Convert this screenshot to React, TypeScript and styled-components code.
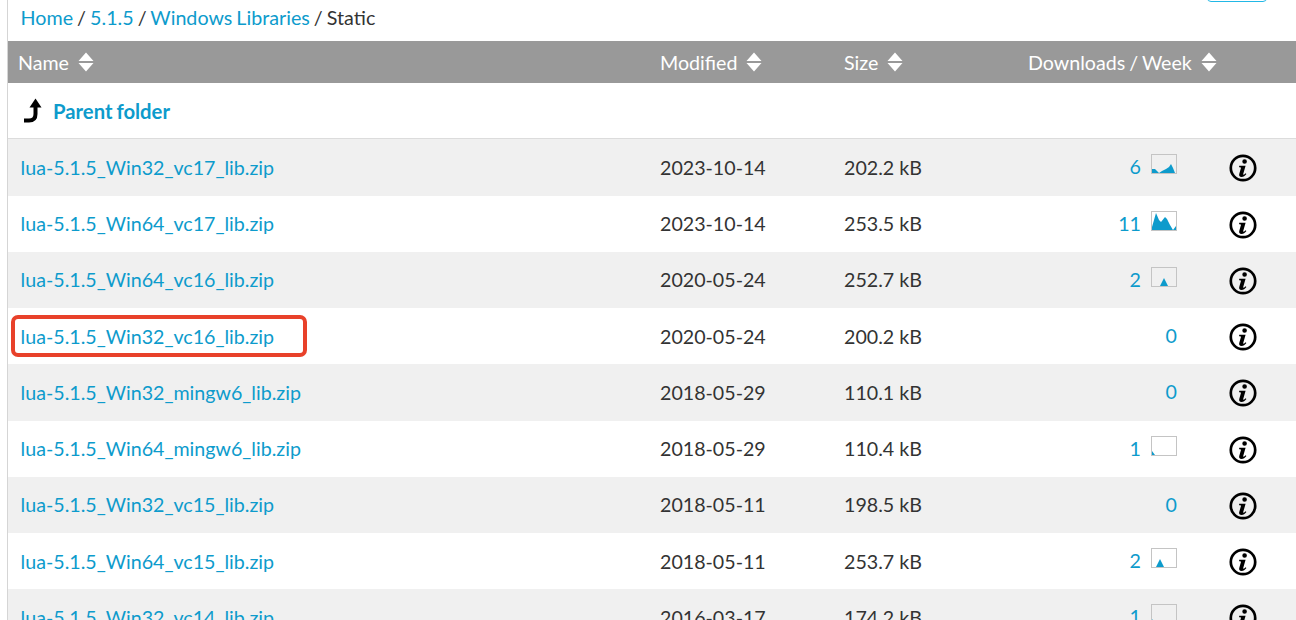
import React from "react";
import styled, { createGlobalStyle } from "styled-components";

const Global = createGlobalStyle`
  html, body { margin: 0; padding: 0; background: #fff; height: 620px; overflow: hidden; }
  body { font-family: Lato, "Liberation Sans", sans-serif; color: #333; }
`;

const Page = styled.div`
  position: relative;
  width: 1296px;
  height: 620px;
  overflow: hidden;
  padding-left: 7px;
  box-sizing: border-box;
`;

const Content = styled.main`
  border-left: 1px solid #d5d5d5;
  height: 620px;
`;

const Breadcrumb = styled.nav`
  height: 41px;
  box-sizing: border-box;
  padding: 6px 0 0 12.6px;
  font-size: 19.7px;
  word-spacing: -1px;
  line-height: 24px;
  color: #333;
`;

const Link = styled.a`
  color: #0d9bcc;
  text-decoration: none;
`;

const Row = styled.div<{ $shaded?: boolean }>`
  display: grid;
  grid-template-columns: 639px 184px 184px 162px 1fr;
  align-items: center;
  height: 56.25px;
  background: ${(p) => (p.$shaded ? "#f0f0f0" : "#fff")};
  font-size: 19.65px;
`;

const HeaderRow = styled(Row)`
  height: 42px;
  background: #999;
  color: #fff;
`;

const HeaderCell = styled.div<{ $first?: boolean }>`
  display: flex;
  align-items: center;
  gap: 9px;
  padding-left: ${(p) => (p.$first ? "10px" : "13px")};
  white-space: nowrap;
  word-spacing: -1px;
`;

const SortSvg = styled.svg`
  display: block;
  flex: none;
  width: 16px;
  height: 20px;
`;

const ParentRow = styled.div`
  display: flex;
  align-items: center;
  gap: 8px;
  height: 56.25px;
  box-sizing: border-box;
  padding-left: 13px;
  border-bottom: 1px solid #dcdcdc;
  font-size: 20.3px;
  font-weight: 700;
  word-spacing: -1px;
`;

const NameCell = styled.div`
  padding-left: 12.6px;
`;

const Cell = styled.div`
  padding-left: 13px;
  color: #333;
`;

const Downloads = styled.div`
  display: flex;
  align-items: center;
  justify-content: flex-end;
  gap: 10px;
`;

const Count = styled(Link)`
  line-height: 24px;
`;

const Spark = styled.svg`
  display: block;
  width: 26px;
  height: 20px;
  margin-top: -6px;
  box-sizing: border-box;
  border: 1px solid #c4c4c4;
`;

const InfoCell = styled.div`
  display: flex;
  justify-content: center;
  margin-left: 13px;
  width: 106px;
`;

const InfoIcon = styled.svg`
  display: block;
  width: 28px;
  height: 28px;
  margin-top: 2px;
`;

const Highlight = styled.div`
  position: absolute;
  left: 11px;
  top: 315px;
  width: 296px;
  height: 42px;
  box-sizing: border-box;
  border: 4px solid #e8412a;
  border-radius: 7px;
`;

const TopButton = styled.div`
  position: absolute;
  left: 1207px;
  top: -20px;
  width: 60px;
  height: 22px;
  box-sizing: border-box;
  border: 1px solid #22b8e6;
  border-radius: 4px;
`;

const SortIcon = () => (
  <SortSvg viewBox="0 0 16 20" aria-hidden="true">
    <path d="M8 0.5 15.5 9H0.5ZM0.5 11H15.5L8 19.5Z" fill="#fff" />
  </SortSvg>
);

const ParentIcon = () => (
  <svg width="24" height="26" viewBox="0 0 24 26" aria-hidden="true">
    <path d="M3 22.5H8C12.5 22.5 14.5 20 14.5 16V8" fill="none" stroke="#000" strokeWidth="4" />
    <path d="M14.5 0.5 20.5 9.5H8.5Z" fill="#000" />
  </svg>
);

const Info = () => (
  <InfoIcon viewBox="0 0 28 28" aria-hidden="true">
    <circle cx="14" cy="14" r="12.2" fill="none" stroke="#000" strokeWidth="2.7" />
    <path d="M15.6 5.2a2.3 2.3 0 1 1 0 4.6 2.3 2.3 0 0 1 0-4.6ZM10.2 11.8h6.4l-2.4 8.2c-.2.8.6.9 1.4.2l.9-.9.9.8c-1.5 2-3 2.9-4.8 2.9-2.2 0-2.9-1.3-2.3-3.2l1.6-5.6c.2-.8-.3-1-1.8-1Z" fill="#000" />
  </InfoIcon>
);

const files = [
  { name: "lua-5.1.5_Win32_vc17_lib.zip", date: "2023-10-14", size: "202.2 kB", count: "6", spark: "M0 18V14H3L7 18 10 16 14 14 17 12 19 9 21 13 23 18Z" },
  { name: "lua-5.1.5_Win64_vc17_lib.zip", date: "2023-10-14", size: "253.5 kB", count: "11", spark: "M0 18V15L4 1 7 8 9 10 13 5 15 7 18 13 21 18 24 14V18Z" },
  { name: "lua-5.1.5_Win64_vc16_lib.zip", date: "2020-05-24", size: "252.7 kB", count: "2", spark: "M8 18 12 10 16 18Z" },
  { name: "lua-5.1.5_Win32_vc16_lib.zip", date: "2020-05-24", size: "200.2 kB", count: "0" },
  { name: "lua-5.1.5_Win32_mingw6_lib.zip", date: "2018-05-29", size: "110.1 kB", count: "0" },
  { name: "lua-5.1.5_Win64_mingw6_lib.zip", date: "2018-05-29", size: "110.4 kB", count: "1", spark: "M0 18V14L3 18Z" },
  { name: "lua-5.1.5_Win32_vc15_lib.zip", date: "2018-05-11", size: "198.5 kB", count: "0" },
  { name: "lua-5.1.5_Win64_vc15_lib.zip", date: "2018-05-11", size: "253.7 kB", count: "2", spark: "M4 18 8 10 12 18Z" },
  { name: "lua-5.1.5_Win32_vc14_lib.zip", date: "2016-03-17", size: "174.2 kB", count: "1", spark: "M0 18V14L3 18Z" },
];

export default function App() {
  return (
    <Page>
      <Global />
      <Content>
        <Breadcrumb>
          <Link href="#">Home</Link> / <Link href="#">5.1.5</Link> / <Link href="#">Windows Libraries</Link> / Static
        </Breadcrumb>
        <HeaderRow>
          <HeaderCell $first>Name <SortIcon /></HeaderCell>
          <HeaderCell>Modified <SortIcon /></HeaderCell>
          <HeaderCell>Size <SortIcon /></HeaderCell>
          <HeaderCell>Downloads / Week <SortIcon /></HeaderCell>
          <div />
        </HeaderRow>
        <ParentRow>
          <ParentIcon />
          <Link href="#">Parent folder</Link>
        </ParentRow>
        {files.map((f, i) => (
          <Row key={f.name} $shaded={i % 2 === 0}>
            <NameCell><Link href="#">{f.name}</Link></NameCell>
            <Cell>{f.date}</Cell>
            <Cell>{f.size}</Cell>
            <Downloads>
              <Count href="#">{f.count}</Count>
              {f.spark && (
                <Spark viewBox="0 0 24 18" aria-hidden="true">
                  <path d={f.spark} fill="#0d9bcc" />
                </Spark>
              )}
            </Downloads>
            <InfoCell><Info /></InfoCell>
          </Row>
        ))}
      </Content>
      <Highlight />
      <TopButton />
    </Page>
  );
}
